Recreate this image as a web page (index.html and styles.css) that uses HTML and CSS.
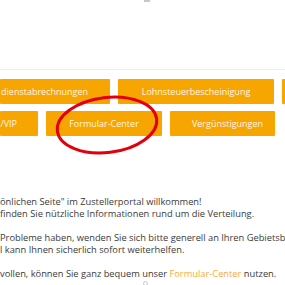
FILE: index.html
```html
<!DOCTYPE html>
<html lang="de">
<head>
    <meta charset="UTF-8">
    <meta name="viewport" content="width=device-width, initial-scale=1.0">
    <title>Zustellerportal</title>
    <link rel="stylesheet" href="styles.css">
</head>
<body>
    <header class="top">
        <span class="top-mark"></span>
    </header>

    <nav class="menu">
        <div class="menu-row">
            <a class="menu-btn btn-cut-left btn-abrechnung" href="#">dienstabrechnungen</a>
            <a class="menu-btn btn-lohn" href="#">Lohnsteuerbescheinigung</a>
            <a class="menu-btn btn-cut-right" href="#">&nbsp;</a>
        </div>
        <div class="menu-row">
            <a class="menu-btn btn-cut-left btn-vip" href="#">/VIP</a>
            <a class="menu-btn btn-formular" href="#">Formular-Center</a>
            <a class="menu-btn btn-verg" href="#">Vergünstigungen</a>
        </div>
        <svg class="marker" width="120" height="70" viewBox="0 0 120 70">
            <ellipse cx="60" cy="35" rx="50" ry="27.5" transform="rotate(-7 60 35)" fill="none" stroke="#e3000b" stroke-width="3"/>
        </svg>
    </nav>

    <main class="content">
        <p>önlichen Seite" im Zustellerportal willkommen!<br>
        finden Sie nützliche Informationen rund um die Verteilung.</p>
        <p>Probleme haben, wenden Sie sich bitte generell an Ihren Gebietsb</p>
        <p class="tight">l kann Ihnen sicherlich sofort weiterhelfen.</p>
        <p>vollen, können Sie ganz bequem unser <a href="#">Formular-Center</a> nutzen.</p>
        <span class="scroll-mark"></span>
    </main>
</body>
</html>
```
FILE: styles.css
```css
:root {
    --orange: #f7a500;
    --text-color: #3a3a3a;
    --link: #f9ab3c;
}

* {
    margin: 0;
    padding: 0;
    box-sizing: border-box;
}

body {
    font-family: 'Open Sans', 'Liberation Sans', sans-serif;
    background: #ffffff;
    color: var(--text-color);
    overflow: hidden;
    width: 285px;
    height: 285px;
}

.top {
    height: 70px;
    border-bottom: 1px solid #ececec;
    display: flex;
    justify-content: flex-start;
}

.top-mark {
    width: 6px;
    height: 2px;
    margin-left: 144px;
    background: #c8c8c8;
}

.menu {
    position: relative;
    padding-top: 9px;
    display: flex;
    flex-direction: column;
    gap: 7px;
}

.menu-row {
    display: flex;
    gap: 8px;
    white-space: nowrap;
}

.menu-btn {
    flex: none;
    height: 25px;
    line-height: 25px;
    background: var(--orange);
    color: #fff6e6;
    font-size: 9px;
    text-decoration: none;
    text-align: center;
    border-radius: 1px;
}

.btn-cut-left {
    text-align: right;
}

.btn-abrechnung {
    width: 110px;
    padding-right: 22px;
}

.btn-lohn {
    width: 156px;
}

.btn-cut-right {
    width: 40px;
}

.btn-vip {
    width: 38px;
    padding-right: 21px;
}

.btn-formular {
    width: 116px;
}

.btn-verg {
    width: 105px;
    padding-left: 10px;
}

.marker {
    position: absolute;
    left: 47px;
    top: 20px;
}

.content {
    padding-top: 60px;
    font-size: 9.3px;
    line-height: 12px;
    white-space: nowrap;
}

.content p {
    margin-bottom: 12px;
}

.content p:nth-of-type(2) {
    margin-bottom: 0;
}

.content p:last-of-type {
    margin-bottom: 1px;
}

.content a {
    color: var(--link);
    text-decoration: none;
}

.scroll-mark {
    display: block;
    width: 5px;
    height: 5px;
    margin-left: 143px;
    border: 1px solid #c8c8c8;
    border-radius: 50%;
}
```
